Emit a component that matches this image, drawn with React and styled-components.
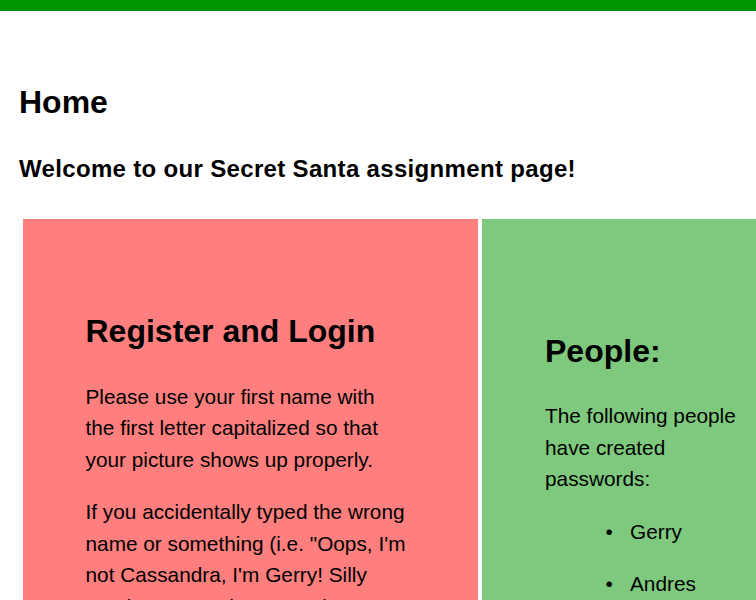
import styled, { createGlobalStyle } from "styled-components"

const GlobalStyle = createGlobalStyle`
    body {
        margin: 0;
        font-family: "Liberation Sans", Helvetica, Arial, sans-serif;
        color: #000;
        background: #fff;
        overflow-x: hidden;
    }
`;

const TopBar = styled.div`
    height: 11px;
    background-color: #009400;
`;

const Main = styled.main`
    padding: 72.8px 0 0 19px;
    overflow: hidden;
`;

const Title = styled.h1`
    font-size: 32px;
    font-weight: bold;
    margin: 0;
`;

const Welcome = styled.h2`
    font-size: 24px;
    font-weight: bold;
    letter-spacing: 0.33px;
    margin: 34.6px 0 35.2px;
`;

const PanelRow = styled.div`
    display: flex;
    gap: 4.5px;
    margin-left: 3.5px;
`;

const Panel = styled.section`
    flex-shrink: 0;
    box-sizing: border-box;
    width: ${props => props.width}px;
    padding: ${props => props.top}px ${props => props.right}px 40px 63px;
    background-color: ${props => props.color};
`;

const PanelTitle = styled.h1`
    font-size: 32px;
    font-weight: bold;
    margin: 0 0 30.5px;
`;

const Text = styled.p`
    font-size: 20.8px;
    line-height: 31.6px;
    margin: 0 0 20.8px;
`;

const PeopleList = styled.ul`
    margin: 0;
    padding-left: 85px;
    font-size: 20.8px;
    line-height: 31.6px;
`;

const Person = styled.li`
    margin-bottom: 21px;

    &::marker {
        content: "•\u00a0\u00a0\u00a0";
        font-size: 20.8px;
    }
`;

const people = ["Gerry", "Andres", "Cassandra"];

function App() {
    return (
        <>
            <GlobalStyle />
            <TopBar />
            <Main>
                <Title>Home</Title>
                <Welcome>Welcome to our Secret Santa assignment page!</Welcome>
                <PanelRow>
                    <Panel width={455} top={94.5} right={70} color="#ff7f7f">
                        <PanelTitle>Register and Login</PanelTitle>
                        <Text>
                            Please use your first name with the first letter capitalized so that your picture shows up properly.
                        </Text>
                        <Text>
                            If you accidentally typed the wrong name or something (i.e. "Oops, I'm not Cassandra, I'm Gerry! Silly me!") Just use the "Reregister" button below.
                        </Text>
                    </Panel>
                    <Panel width={345} top={114.2} right={63} color="#7fc97f">
                        <PanelTitle>People:</PanelTitle>
                        <Text>The following people have created passwords:</Text>
                        <PeopleList>
                            {people.map(name => <Person key={name}>{name}</Person>)}
                        </PeopleList>
                    </Panel>
                </PanelRow>
            </Main>
        </>
    )
}
export default App
